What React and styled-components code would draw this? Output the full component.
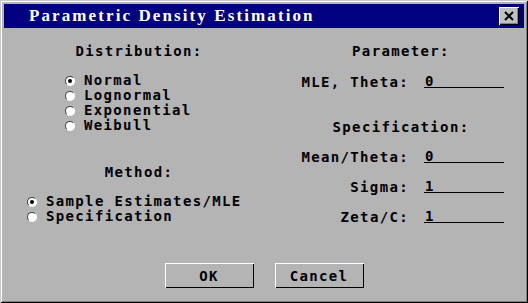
import styled, { createGlobalStyle } from 'styled-components';

const GlobalStyle = createGlobalStyle`
    html, body {
        margin: 0;
        padding: 0;
        background: #b4b4b4;
    }
`;

const distributions = ['Normal', 'Lognormal', 'Exponential', 'Weibull'];
const methods = ['Sample Estimates/MLE', 'Specification'];
const specFields = [
    { label: 'Mean/Theta:', value: '0' },
    { label: 'Sigma:', value: '1' },
    { label: 'Zeta/C:', value: '1' },
];

const Radio = ({ checked, label }) => (
    <RadioRow>
        <RadioDot $checked={checked} />
        <span>{label}</span>
    </RadioRow>
);

const App = () => {
    return (
        <>
            <GlobalStyle />
            <Window>
                <TitleBar>
                    <span>Parametric Density Estimation</span>
                    <CloseButton>
                        <svg width='10' height='10' viewBox='0 0 10 10'>
                            <path
                                d='M1 1 L9 9 M9 1 L1 9'
                                stroke='#000'
                                strokeWidth='2'
                            />
                        </svg>
                    </CloseButton>
                </TitleBar>
                <Body>
                    <Columns>
                        <LeftColumn>
                            <Heading>Distribution:</Heading>
                            <RadioGroup $indent={61} $top={14}>
                                {distributions.map((d, idx) => (
                                    <Radio key={d} label={d} checked={idx === 0} />
                                ))}
                            </RadioGroup>
                            <Heading $top={31}>Method:</Heading>
                            <RadioGroup $indent={23} $top={14}>
                                {methods.map((m, idx) => (
                                    <Radio key={m} label={m} checked={idx === 0} />
                                ))}
                            </RadioGroup>
                        </LeftColumn>
                        <RightColumn>
                            <Heading>Parameter:</Heading>
                            <Fields $top={15}>
                                <Field>
                                    <label>MLE, Theta:</label>
                                    <Entry>0</Entry>
                                </Field>
                            </Fields>
                            <Heading $top={29}>Specification:</Heading>
                            <Fields $top={14}>
                                {specFields.map((f) => (
                                    <Field key={f.label}>
                                        <label>{f.label}</label>
                                        <Entry>{f.value}</Entry>
                                    </Field>
                                ))}
                            </Fields>
                        </RightColumn>
                    </Columns>
                    <Footer>
                        <Button>OK</Button>
                        <Button>Cancel</Button>
                    </Footer>
                </Body>
            </Window>
        </>
    );
};

export default App;

const Window = styled.div`
    width: 528px;
    height: 303px;
    box-sizing: border-box;
    display: flex;
    flex-direction: column;
    padding: 4px 4px 3px 4px;
    background: #b4b4b4;
    box-shadow: inset 1px 1px 0 #c8c8c8, inset -1px -1px 0 #000,
        inset 2px 2px 0 #fff, inset -2px -2px 0 #808080;
    font-family: 'DejaVu Sans Mono', monospace;
    font-weight: bold;
    font-size: 14px;
    letter-spacing: 1.35px;
    color: #000;
`;

const TitleBar = styled.div`
    height: 24px;
    display: flex;
    align-items: center;
    justify-content: space-between;
    padding: 0 5px 0 25px;
    background: #000080;
    color: #fff;
    font-family: 'Liberation Serif', serif;
    font-size: 17px;
    font-weight: bold;
    letter-spacing: 2.1px;
`;

const CloseButton = styled.div`
    width: 20px;
    height: 18px;
    box-sizing: border-box;
    display: flex;
    align-items: center;
    justify-content: center;
    background: #c0c0c0;
    box-shadow: inset 1px 1px 0 #fff, inset -1px -1px 0 #000,
        inset -2px -2px 0 #808080;
`;

const Body = styled.div`
    flex: 1;
    display: flex;
    flex-direction: column;
    padding-top: 15px;
`;

const Columns = styled.div`
    display: grid;
    grid-template-columns: 270px 250px;
`;

const LeftColumn = styled.div`
    display: flex;
    flex-direction: column;
`;

const RightColumn = styled.div`
    display: flex;
    flex-direction: column;
    padding-left: 4px;
`;

const Heading = styled.div`
    height: 16px;
    line-height: 16px;
    margin-top: ${(p) => p.$top || 0}px;
    text-align: center;
`;

const RadioGroup = styled.div`
    display: flex;
    flex-direction: column;
    margin-top: ${(p) => p.$top}px;
    padding-left: ${(p) => p.$indent}px;
`;

const RadioRow = styled.div`
    height: 15px;
    display: flex;
    align-items: center;
    gap: 9px;
    line-height: 15px;
    white-space: nowrap;
`;

const RadioDot = styled.span`
    position: relative;
    width: 10px;
    height: 10px;
    flex: none;
    box-sizing: border-box;
    border-radius: 50%;
    background: #fff;
    border: 1px solid;
    border-color: #404040 #fff #fff #404040;

    &::after {
        content: '';
        display: ${(p) => (p.$checked ? 'block' : 'none')};
        position: absolute;
        left: 2px;
        top: 2px;
        width: 4px;
        height: 4px;
        border-radius: 50%;
        background: #000;
    }
`;

const Fields = styled.div`
    display: flex;
    flex-direction: column;
    gap: 14px;
    margin-top: ${(p) => p.$top}px;
`;

const Field = styled.div`
    display: grid;
    grid-template-columns: 131px 80px;
    column-gap: 15px;
    height: 16px;
    line-height: 16px;

    label {
        text-align: right;
        white-space: nowrap;
    }
`;

const Entry = styled.div`
    height: 14px;
    box-sizing: border-box;
    padding-left: 1px;
    border-bottom: 1px solid #000;
    line-height: 14px;
`;

const Footer = styled.div`
    display: flex;
    justify-content: center;
    gap: 21px;
    margin-top: 38px;
`;

const Button = styled.div`
    width: 89px;
    height: 25px;
    box-sizing: border-box;
    display: flex;
    align-items: center;
    justify-content: center;
    background: #b4b4b4;
    box-shadow: inset 1px 1px 0 #fff, inset -1px -1px 0 #000;
`;
